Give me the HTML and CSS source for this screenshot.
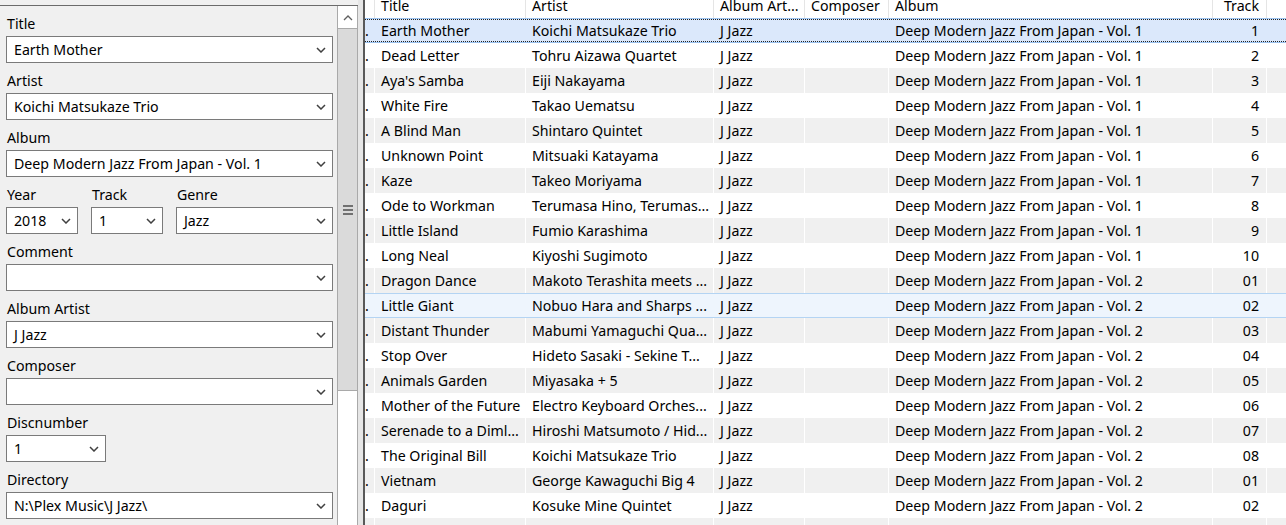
FILE: index.html
```html
<!DOCTYPE html>
<html lang="en">
<head>
    <meta charset="UTF-8">
    <title>Tag Editor</title>
    <link rel="stylesheet" href="styles.css">
</head>
<body>
    <div class="app">
        <div class="left">
            <div class="pane">
                <div class="editor">
                    <div class="field">
                        <div class="label">Title</div>
                        <div class="combo"><span>Earth Mother</span><svg class="chev" viewBox="0 0 10 6" width="10" height="6"><path d="M1 1l4 4 4-4"/></svg></div>
                    </div>
                    <div class="field">
                        <div class="label">Artist</div>
                        <div class="combo"><span>Koichi Matsukaze Trio</span><svg class="chev" viewBox="0 0 10 6" width="10" height="6"><path d="M1 1l4 4 4-4"/></svg></div>
                    </div>
                    <div class="field">
                        <div class="label">Album</div>
                        <div class="combo"><span>Deep Modern Jazz From Japan - Vol. 1</span><svg class="chev" viewBox="0 0 10 6" width="10" height="6"><path d="M1 1l4 4 4-4"/></svg></div>
                    </div>
                    <div class="field_row">
                        <div class="field year">
                            <div class="label">Year</div>
                            <div class="combo"><span>2018</span><svg class="chev" viewBox="0 0 10 6" width="10" height="6"><path d="M1 1l4 4 4-4"/></svg></div>
                        </div>
                        <div class="field track">
                            <div class="label">Track</div>
                            <div class="combo"><span>1</span><svg class="chev" viewBox="0 0 10 6" width="10" height="6"><path d="M1 1l4 4 4-4"/></svg></div>
                        </div>
                        <div class="field genre">
                            <div class="label">Genre</div>
                            <div class="combo"><span>Jazz</span><svg class="chev" viewBox="0 0 10 6" width="10" height="6"><path d="M1 1l4 4 4-4"/></svg></div>
                        </div>
                    </div>
                    <div class="field">
                        <div class="label">Comment</div>
                        <div class="combo"><span></span><svg class="chev" viewBox="0 0 10 6" width="10" height="6"><path d="M1 1l4 4 4-4"/></svg></div>
                    </div>
                    <div class="field">
                        <div class="label">Album Artist</div>
                        <div class="combo"><span>J Jazz</span><svg class="chev" viewBox="0 0 10 6" width="10" height="6"><path d="M1 1l4 4 4-4"/></svg></div>
                    </div>
                    <div class="field">
                        <div class="label">Composer</div>
                        <div class="combo"><span></span><svg class="chev" viewBox="0 0 10 6" width="10" height="6"><path d="M1 1l4 4 4-4"/></svg></div>
                    </div>
                    <div class="field disc">
                        <div class="label">Discnumber</div>
                        <div class="combo"><span>1</span><svg class="chev" viewBox="0 0 10 6" width="10" height="6"><path d="M1 1l4 4 4-4"/></svg></div>
                    </div>
                    <div class="field">
                        <div class="label">Directory</div>
                        <div class="combo"><span>N:\Plex Music\J Jazz\</span><svg class="chev" viewBox="0 0 10 6" width="10" height="6"><path d="M1 1l4 4 4-4"/></svg></div>
                    </div>
                </div>
                <div class="vscroll">
                    <div class="sb_up"><svg viewBox="0 0 10 6" width="10" height="6"><path d="M1 5l4-4 4 4"/></svg></div>
                    <div class="sb_thumb"><i></i><i></i><i></i></div>
                    <div class="sb_track"></div>
                </div>
            </div>
        </div>
        <div class="splitter"></div>
        <div class="grid">
            <div class="row head">
                <div class="cell c0"></div>
                <div class="cell c_title">Title</div>
                <div class="cell c_artist">Artist</div>
                <div class="cell c_aart">Album Art...</div>
                <div class="cell c_comp">Composer</div>
                <div class="cell c_album">Album</div>
                <div class="cell c_track">Track</div>
                <div class="cell c_end"></div>
            </div>
            <div class="rows" id="rows"></div>
        </div>
    </div>
    <script src="grid.js"></script>
</body>
</html>
```

FILE: grid.js
```js
// 曲目列表数据
var tracks = [
    ["Earth Mother", "Koichi Matsukaze Trio", 1, "1"],
    ["Dead Letter", "Tohru Aizawa Quartet", 1, "2"],
    ["Aya's Samba", "Eiji Nakayama", 1, "3"],
    ["White Fire", "Takao Uematsu", 1, "4"],
    ["A Blind Man", "Shintaro Quintet", 1, "5"],
    ["Unknown Point", "Mitsuaki Katayama", 1, "6"],
    ["Kaze", "Takeo Moriyama", 1, "7"],
    ["Ode to Workman", "Terumasa Hino, Terumas...", 1, "8"],
    ["Little Island", "Fumio Karashima", 1, "9"],
    ["Long Neal", "Kiyoshi Sugimoto", 1, "10"],
    ["Dragon Dance", "Makoto Terashita meets ...", 2, "01"],
    ["Little Giant", "Nobuo Hara and Sharps ...", 2, "02"],
    ["Distant Thunder", "Mabumi Yamaguchi Qua...", 2, "03"],
    ["Stop Over", "Hideto Sasaki - Sekine T...", 2, "04"],
    ["Animals Garden", "Miyasaka + 5", 2, "05"],
    ["Mother of the Future", "Electro Keyboard Orches...", 2, "06"],
    ["Serenade to a Diml...", "Hiroshi Matsumoto / Hid...", 2, "07"],
    ["The Original Bill", "Koichi Matsukaze Trio", 2, "08"],
    ["Vietnam", "George Kawaguchi Big 4", 2, "01"],
    ["Daguri", "Kosuke Mine Quintet", 2, "02"]
];
var rows = document.getElementById("rows");
var html = "";
for (var i = 0; i < tracks.length; i++) {
    var t = tracks[i];
    var cls = "row";
    if (i == 0) cls += " sel";
    if (i == 11) cls += " hover";
    html += '<div class="' + cls + '">' +
        '<div class="cell c0">.</div>' +
        '<div class="cell c_title">' + t[0] + '</div>' +
        '<div class="cell c_artist">' + t[1] + '</div>' +
        '<div class="cell c_aart">J Jazz</div>' +
        '<div class="cell c_comp"></div>' +
        '<div class="cell c_album">Deep Modern Jazz From Japan - Vol. ' + t[2] + '</div>' +
        '<div class="cell c_track">' + t[3] + '</div>' +
        '<div class="cell c_end"></div>' +
        '</div>';
}
// 底部露出的半行
html += '<div class="row"><div class="cell c0"></div><div class="cell c_title"></div><div class="cell c_artist"></div><div class="cell c_aart"></div><div class="cell c_comp"></div><div class="cell c_album"></div><div class="cell c_track"></div><div class="cell c_end"></div></div>';
rows.innerHTML = html;
```

FILE: styles.css
```css
body{
    margin: 0;
    width: 1286px;
    height: 525px;
    overflow: hidden;
    font-family: "Noto Sans", "Open Sans", sans-serif;
    font-size: 14.2px;
    color: #000;
    background-color: #fff;
}
.app{
    display: flex;
    height: 525px;
}
/* 左侧标签编辑面板 */
.left{
    width: 358px;
    flex: none;
    background-color: #f0f0f0;
    padding-top: 5px;
    box-sizing: border-box;
    display: flex;
    flex-direction: column;
}
.pane{
    flex: 1;
    border-top: 1px solid #6b6b6b;
    display: flex;
    min-height: 0;
}
.editor{
    width: 337px;
    flex: none;
    padding: 0 4px 0 6px;
    box-sizing: border-box;
}
.field_row{
    display: flex;
    gap: 13px;
}
.field .label{
    height: 30px;
    line-height: 20px;
    padding: 8px 0 0 1px;
    box-sizing: border-box;
    white-space: nowrap;
}
.year, .track{
    width: 72px;
}
.genre{
    flex: 1;
}
.disc .combo{
    width: 100px;
}
.combo{
    height: 27px;
    box-sizing: border-box;
    border: 1px solid #7a7a7a;
    background-color: #fff;
    display: flex;
    align-items: center;
    justify-content: space-between;
    padding: 0 6px 0 7px;
    white-space: nowrap;
}
.chev{
    flex: none;
}
.chev path{
    fill: none;
    stroke: #404040;
    stroke-width: 1.5;
}
/* 竖向滚动条 */
.vscroll{
    width: 21px;
    flex: none;
    border-left: 1px solid #a9a9a9;
    border-right: 1px solid #a9a9a9;
    box-sizing: border-box;
    background-color: #fff;
    display: flex;
    flex-direction: column;
    padding-top: 1px;
}
.sb_up{
    height: 21px;
    display: flex;
    align-items: center;
    justify-content: center;
}
.sb_up path{
    fill: none;
    stroke: #606060;
    stroke-width: 1.3;
}
.sb_thumb{
    height: 363px;
    box-sizing: border-box;
    background-color: #dadada;
    border-top: 1px solid #a9a9a9;
    border-bottom: 1px solid #a9a9a9;
    display: flex;
    flex-direction: column;
    align-items: center;
    justify-content: center;
    gap: 2px;
}
.sb_thumb i{
    display: block;
    width: 10px;
    height: 2px;
    background-color: #707070;
}
.sb_track{
    flex: 1;
}
.splitter{
    width: 7px;
    flex: none;
    background-color: #e6e6e6;
    border-right: 2px solid #595959;
    box-sizing: border-box;
}
/* 右侧曲目表格 */
.grid{
    flex: 1;
    overflow: hidden;
}
.row{
    display: flex;
    height: 25px;
    line-height: 25px;
    white-space: nowrap;
    position: relative;
}
.head{
    margin-top: -7px;
}
.cell{
    flex: none;
    height: 25px;
    box-sizing: border-box;
    overflow: hidden;
    padding-left: 6px;
    border-right: 1px solid #fff;
}
.head .cell{
    border-right-color: #e5e5e5;
}
.c0{ width: 10px; padding-left: 0; }
.c_title{ width: 151px; }
.c_artist{ width: 188px; }
.c_aart{ width: 91px; }
.c_comp{ width: 84px; }
.c_album{ width: 324px; }
.c_track{ width: 54px; text-align: right; padding: 0 7px 0 0; }
.c_end{ flex: 1; border-right: none; }
.rows .row:nth-child(odd){
    background-color: #f0f0f0;
}
.rows .row.sel{
    background-color: #dbe8fb;
    box-shadow: inset 0 1px #9cc3ef, inset 0 -1px #9cc3ef;
}
/* 选中行的虚线焦点框 */
.rows .row.sel::after{
    content: "";
    position: absolute;
    left: 0;
    right: 0;
    top: 1px;
    bottom: 1px;
    border-top: 1px dotted #222;
    border-bottom: 1px dotted #222;
}
.rows .row.hover{
    background-color: #eef5fd;
    box-shadow: inset 0 1px #b4d4f3, inset 0 -1px #b4d4f3;
}
.sel .cell, .hover .cell{
    border-right-color: transparent;
}
```
